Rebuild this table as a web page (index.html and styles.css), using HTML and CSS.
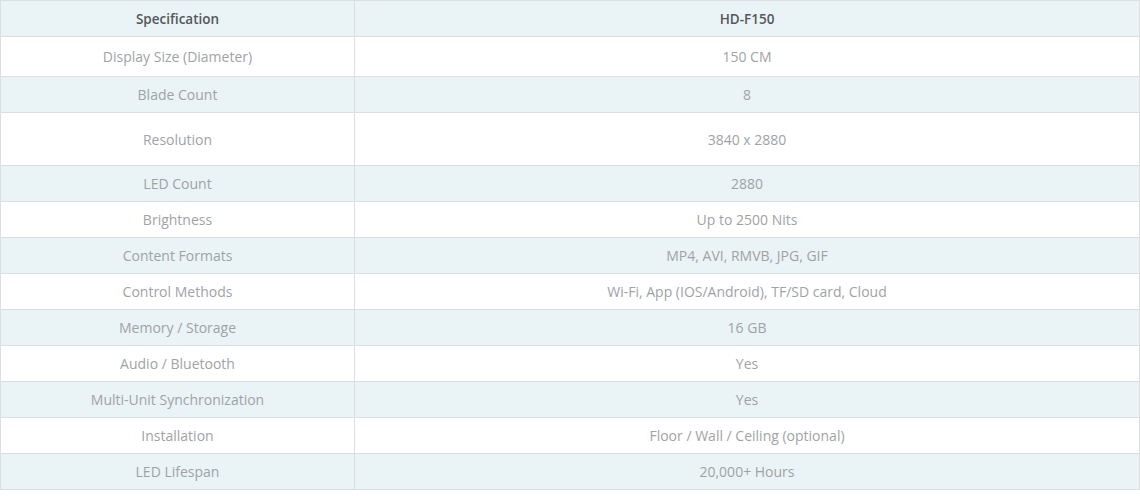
FILE: index.html
```html
<!DOCTYPE html>
<html>
<head>
<meta charset="utf-8">
<link rel="stylesheet" href="styles.css">
</head>
<body>
<table class="spec">
  <thead>
    <tr class="row-head"><th class="c1">Specification</th><th class="c2">HD-F150</th></tr>
  </thead>
  <tbody>
    <tr class="white tall1"><td>Display Size (Diameter)</td><td>150 CM</td></tr>
    <tr class="tint"><td>Blade Count</td><td>8</td></tr>
    <tr class="white tall2"><td>Resolution</td><td>3840 x 2880</td></tr>
    <tr class="tint"><td>LED Count</td><td>2880</td></tr>
    <tr class="white"><td>Brightness</td><td>Up to 2500 Nits</td></tr>
    <tr class="tint"><td>Content Formats</td><td>MP4, AVI, RMVB, JPG, GIF</td></tr>
    <tr class="white"><td>Control Methods</td><td>Wi-Fi, App (IOS/Android), TF/SD card, Cloud</td></tr>
    <tr class="tint"><td>Memory / Storage</td><td>16 GB</td></tr>
    <tr class="white"><td>Audio / Bluetooth</td><td>Yes</td></tr>
    <tr class="tint"><td>Multi-Unit Synchronization</td><td>Yes</td></tr>
    <tr class="white"><td>Installation</td><td>Floor / Wall / Ceiling (optional)</td></tr>
    <tr class="tint"><td>LED Lifespan</td><td>20,000+ Hours</td></tr>
  </tbody>
</table>
</body>
</html>
```
FILE: styles.css
```css
html, body {
  margin: 0;
  padding: 0;
  background: #ffffff;
}
.spec {
  width: 1140px;
  border-collapse: collapse;
  font-family: "Open Sans", "Noto Sans", sans-serif;
  font-size: 14px;
  table-layout: fixed;
}
.spec th, .spec td {
  border: 1px solid #dcdfe0;
  text-align: center;
  padding: 0;
  height: 35px;
}
.spec .c1 { width: 353px; }
.spec th {
  background: #eaf3f6;
  color: #545859;
  font-weight: 600;
  font-size: 13.5px;
}
.spec td {
  color: #a0a3a5;
  font-weight: 400;
}
.tint td { background: #eaf3f6; }
.white td { background: #ffffff; }
.tall1 td { height: 39px; }
.tall2 td { height: 52px; }
```
